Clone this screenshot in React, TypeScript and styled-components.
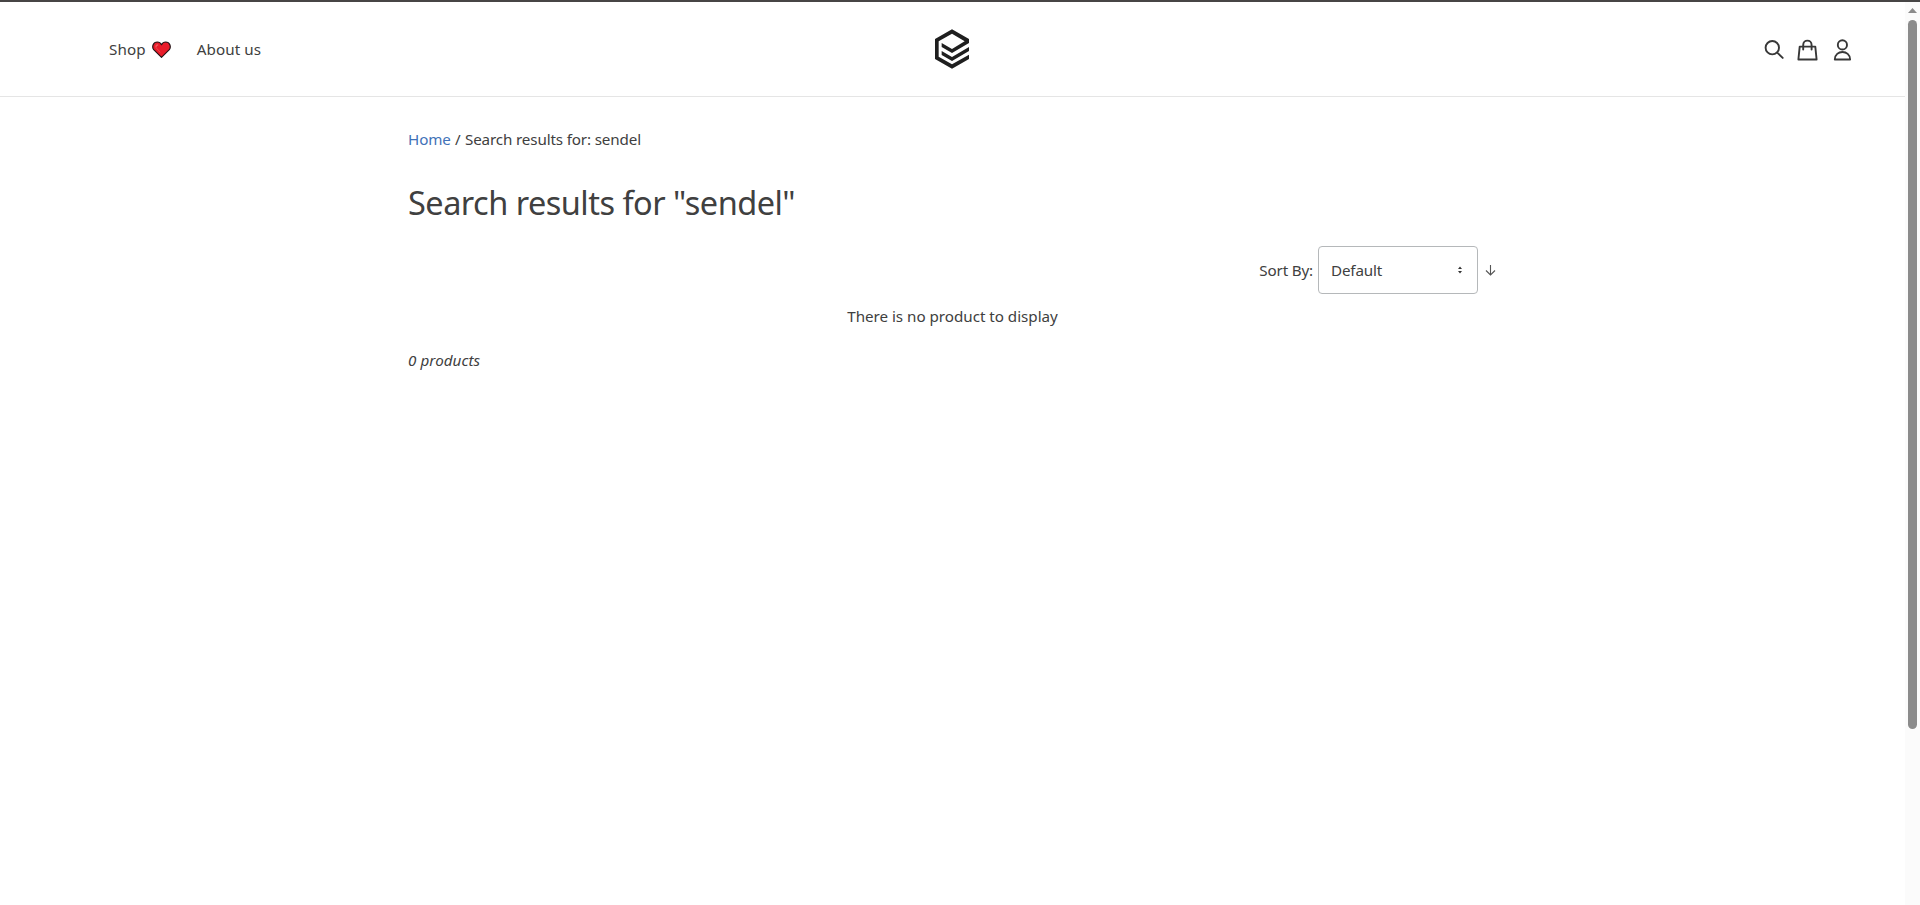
import React from "react";
import styled, { createGlobalStyle } from "styled-components";

const GlobalStyle = createGlobalStyle`
  * { box-sizing: border-box; }
  body {
    margin: 0;
    background: #fff;
    color: #404040;
    font-family: "Segoe UI", "Noto Sans", sans-serif;
    font-size: 15.2px;
    line-height: 24px;
    overflow: hidden;
  }
`;

const Page = styled.div`
  display: flex;
  height: 905px;
  border-top: 2px solid #474545;
`;

const Content = styled.div`
  flex: 1;
  min-width: 0;
`;

const Header = styled.header`
  display: grid;
  grid-template-columns: 1fr auto 1fr;
  align-items: center;
  height: 95px;
  padding: 0 51px 0 109px;
  border-bottom: 1px solid #e5e5e5;
`;

const Nav = styled.nav`
  display: flex;
  align-items: center;
  gap: 26px;
`;

const NavItem = styled.a`
  display: flex;
  align-items: center;
  gap: 6px;
`;

const LogoBox = styled.div`
  display: flex;
  margin-right: 59px;
`;

const Actions = styled.div`
  display: flex;
  justify-content: flex-end;
  align-items: center;
  padding-top: 1px;
`;

const Main = styled.main`
  width: 1089px;
  margin: 0 auto;
  padding-top: 30px;
`;

const Text = styled.span<{ $spacing?: number }>`
  white-space: pre;
  letter-spacing: ${(p) => p.$spacing ?? 0}px;
`;

const Breadcrumb = styled.div`
  height: 24px;
`;

const HomeLink = styled.a`
  color: #4272b8;
`;

const Title = styled.h1`
  margin: 28px 0 0;
  height: 48px;
  font-size: 32.5px;
  font-weight: 400;
  line-height: 48px;
`;

const Toolbar = styled.div`
  display: flex;
  justify-content: flex-end;
  align-items: center;
  height: 48px;
  margin-top: 19px;
`;

const Select = styled.div`
  display: flex;
  align-items: center;
  justify-content: space-between;
  width: 160px;
  height: 48px;
  margin-left: 5px;
  padding: 0 14px 0 12px;
  border: 1px solid #b5b8ba;
  border-radius: 4px;
`;

const Direction = styled.span`
  display: flex;
  margin: 0 1px 0 7px;
`;

const Empty = styled.p`
  margin: 10px 0 0;
  text-align: center;
`;

const Count = styled.p`
  margin: 20px 0 0;
  font-style: italic;
`;

const Scrollbar = styled.div`
  display: flex;
  flex-direction: column;
  align-items: center;
  width: 15px;
  padding-top: 6px;
  background: #fbfbfb;
`;

const Thumb = styled.div`
  width: 9px;
  height: 709px;
  margin-top: 7px;
  border-radius: 5px;
  background: #8b8b8b;
`;

const Heart = () => (
  <svg width="19" height="17" viewBox="0 0 57 51">
    <path
      d="M28.5 49 5 26C-1 18 3 3 16 3c6 0 10 3 12.500 8C31 6 35 3 41 3c13 0 17 15 11 23Z"
      fill="#e81c2a"
      stroke="#241416"
      strokeWidth="3.5"
      strokeLinejoin="round"
    />
    <path d="M12 18c0-4 2-6 5-6" fill="none" stroke="#f05a5a" strokeWidth="4" strokeLinecap="round" />
    <path d="m14 22 10 11" fill="none" stroke="#f0454d" strokeWidth="3" strokeLinecap="round" />
  </svg>
);

const Logo = () => (
  <svg width="34" height="40" viewBox="46 41 102 120" fill="#1f1f1f">
    <path
      fillRule="evenodd"
      d="M97 42 148 71V83L97 113 66 95V83L97 101 135 78 97 55 57 78V124L97 147 148 118V131L97 160 46 131V71Z"
    />
    <path d="M66 107 97 125 148 95V107L97 137 66 119Z" />
  </svg>
);

const HeaderIcon = styled.svg`
  display: block;
  fill: none;
  stroke: #383838;
  stroke-width: 1.9;
  stroke-linecap: round;
  stroke-linejoin: round;
`;

export default function App() {
  return (
    <Page>
      <GlobalStyle />
      <Content>
        <Header>
          <Nav>
            <NavItem>
              <Text $spacing={0.15}>Shop</Text>
              <Heart />
            </NavItem>
            <NavItem>
              <Text $spacing={0.05}>About us</Text>
            </NavItem>
          </Nav>
          <LogoBox>
            <Logo />
          </LogoBox>
          <Actions>
            <HeaderIcon width="34" height="24" viewBox="0 0 34 24">
              <circle cx="9.300" cy="9.700" r="6.700" />
              <path d="m14.200 14.600 5.500 5.300" />
            </HeaderIcon>
            <HeaderIcon width="34" height="24" viewBox="0 0 34 24">
              <path d="M2.700 8.600H18.300L19.600 21.500H1.400ZM6.200 11.500V7C6.200 1.200 14.600 1.200 14.600 7V11.500" />
            </HeaderIcon>
            <HeaderIcon width="23" height="24" viewBox="0 0 23 24">
              <circle cx="11.400" cy="6.900" r="4.600" />
              <path d="M3.800 21.500C3.800 11.500 19.100 11.500 19.100 21.500Z" />
            </HeaderIcon>
          </Actions>
        </Header>
        <Main>
          <Breadcrumb>
            <HomeLink>
              <Text $spacing={-0.1}>Home</Text>
            </HomeLink>
            <Text $spacing={0.2}> / </Text>
            <Text $spacing={-0.14}>Search results for: sendel</Text>
          </Breadcrumb>
          <Title>
            <Text $spacing={-0.52}>Search results for "sendel"</Text>
          </Title>
          <Toolbar>
            <Text $spacing={-0.15}>Sort By:</Text>
            <Select>
              <Text $spacing={-0.15}>Default</Text>
              <svg width="6" height="8" viewBox="0 0 6 8" fill="#333">
                <path d="M1 3 3 .5 5 3ZM1 5 3 7.500 5 5Z" />
              </svg>
            </Select>
            <Direction>
              <svg width="11" height="12" viewBox="0 0 11 12" fill="none" stroke="#555" strokeWidth="1.1">
                <path d="M5.500 1V11M1 6.500 5.500 11 10 6.500" />
              </svg>
            </Direction>
          </Toolbar>
          <Empty>
            <Text $spacing={-0.02}>There is no product to display</Text>
          </Empty>
          <Count>
            <Text $spacing={0.07}>0 products</Text>
          </Count>
        </Main>
      </Content>
      <Scrollbar>
        <svg width="9" height="5" viewBox="0 0 9 5" fill="#8b8b8b">
          <path d="M0 5 4.500 0 9 5Z" />
        </svg>
        <Thumb />
      </Scrollbar>
    </Page>
  );
}
